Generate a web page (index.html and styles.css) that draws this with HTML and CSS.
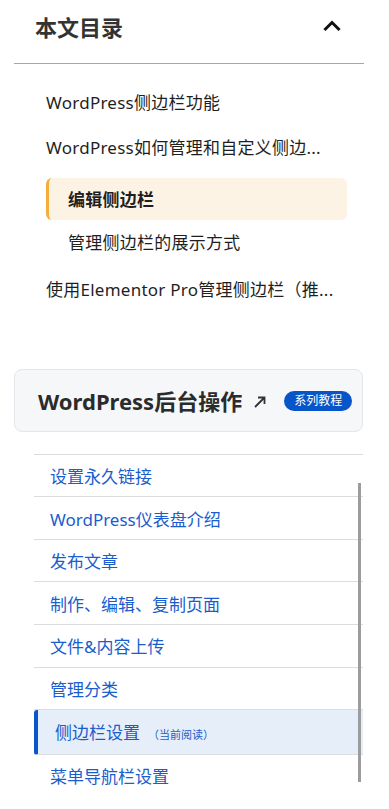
FILE: index.html
```html
<!DOCTYPE html>
<html lang="zh-CN">
<head>
    <meta charset="UTF-8">
    <meta name="viewport" content="width=device-width, initial-scale=1.0">
    <title>侧边栏设置</title>
    <link rel="stylesheet" href="styles.css">
</head>
<body>
    <div class="toc">
        <div class="toc-head">
            <span class="toc-title">本文目录</span>
            <svg class="toc-toggle" width="20" height="14" viewBox="0 0 20 14">
                <polyline points="3.5,11 10,4.5 16.5,11" fill="none" stroke="#111" stroke-width="3" stroke-linecap="square"/>
            </svg>
        </div>
        <ul class="toc-list">
            <li><a href="#">WordPress侧边栏功能</a></li>
            <li>
                <a href="#">WordPress如何管理和自定义侧边...</a>
                <ul class="toc-sub">
                    <li class="active"><a href="#">编辑侧边栏</a></li>
                    <li><a href="#">管理侧边栏的展示方式</a></li>
                </ul>
            </li>
            <li><a href="#">使用Elementor Pro管理侧边栏（推...</a></li>
        </ul>
    </div>

    <div class="series">
        <div class="series-card">
            <span class="series-title">WordPress后台操作</span>
            <svg class="series-arrow" width="14" height="14" viewBox="0 0 14 14">
                <path d="M2 12 L11.5 2.5 M5 2.5 H11.5 V9" fill="none" stroke="#333" stroke-width="1.8"/>
            </svg>
            <span class="series-badge">系列教程</span>
        </div>
        <div class="series-list">
            <ul>
                <li><a href="#">网站常规设置</a></li>
                <li><a href="#">设置永久链接</a></li>
                <li><a href="#">WordPress仪表盘介绍</a></li>
                <li><a href="#">发布文章</a></li>
                <li><a href="#">制作、编辑、复制页面</a></li>
                <li><a href="#">文件&amp;内容上传</a></li>
                <li><a href="#">管理分类</a></li>
                <li class="current"><a href="#">侧边栏设置<small>（当前阅读）</small></a></li>
                <li><a href="#">菜单导航栏设置</a></li>
            </ul>
        </div>
    </div>
</body>
</html>
```

FILE: styles.css
```css
body {
    margin: 0;
    font-family: "Noto Sans", "Noto Sans CJK SC", sans-serif;
    background: #fff;
    color: #1f1f1f;
}

a {
    text-decoration: none;
}

/* table of contents */
.toc {
    margin: 0 25px 0 14px;
}

.toc-head {
    display: flex;
    align-items: center;
    justify-content: space-between;
    height: 54px;
    padding: 0 22px 9px 21px;
    border-bottom: 1px solid #a0a7b1;
}

.toc-title {
    font-size: 22px;
    font-weight: 700;
    line-height: 30px;
    color: #333;
}

.toc-toggle {
    margin-bottom: 4px;
}

.toc-list {
    list-style: none;
    margin: 0;
    padding: 16px 17px 0 32px;
}

.toc-list a {
    display: block;
    font-size: 17px;
    line-height: 25px;
    letter-spacing: 0.25px;
    color: #1f1f1f;
    white-space: nowrap;
    overflow: hidden;
    text-overflow: ellipsis;
}

.toc-list > li > a {
    padding: 10px 0;
}

.toc-sub {
    list-style: none;
    margin: 8px 0 2px;
    padding: 0;
}

.toc-sub a {
    padding: 10px 0 10px 22px;
}

.toc-sub .active a {
    padding: 8.5px 0 8.5px 19px;
    border-left: 3px solid #f5ae3c;
    border-radius: 6px;
    background: #fdf3e5;
    font-weight: 700;
}

/* series box */
.series {
    margin: 57px 26px 0 14px;
}

.series-card {
    display: flex;
    align-items: center;
    height: 61px;
    padding-left: 23px;
    background: #f6f7f9;
    border: 1px solid #e3e6ea;
    border-radius: 8px;
}

.series-title {
    font-size: 22px;
    font-weight: 700;
    line-height: 30px;
    color: #2b2b2b;
}

.series-arrow {
    margin: 2px 0 0 11px;
}

.series-badge {
    margin-left: 17px;
    padding: 0 10px;
    font-size: 12px;
    line-height: 20px;
    color: #fff;
    background: #0755c9;
    border-radius: 10px;
}

.series-list {
    position: relative;
    height: 346px;
    margin: 11px 0 0 20px;
    overflow: hidden;
}

.series-list::after {
    content: "";
    position: absolute;
    right: 2px;
    top: 40px;
    bottom: 7px;
    width: 3px;
    background: #9c9c9c;
}

.series-list ul {
    list-style: none;
    margin: -31px 0 0;
    padding: 0;
}

.series-list a {
    display: block;
    padding: 9.5px 16px 6.5px;
    font-size: 17px;
    line-height: 25.6px;
    color: #1a5dcc;
    border-bottom: 1px solid #dcdcdf;
}

.series-list .current a {
    padding-left: 17px;
    background: #e6eef9;
    border-left: 4px solid #0756cc;
    border-radius: 3px 0 0 3px;
}

.series-list small {
    margin-left: 8px;
    font-size: 11px;
}
```
